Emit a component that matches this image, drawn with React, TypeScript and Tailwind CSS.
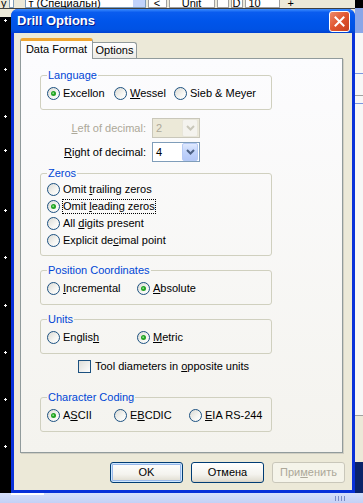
import React from 'react';

const Radio = ({ checked = false }: { checked?: boolean }) => (
  <svg width="13" height="13" viewBox="0 0 13 13" className="shrink-0">
    <defs>
      <linearGradient id="rbg" x1="0" y1="0" x2="1" y2="1">
        <stop offset="0" stopColor="#D8D8D2" />
        <stop offset="0.6" stopColor="#F6F6F3" />
        <stop offset="1" stopColor="#FFFFFF" />
      </linearGradient>
    </defs>
    <circle cx="6.5" cy="6.5" r="6" fill="url(#rbg)" stroke="#1C5180" strokeWidth="1" />
    {checked && (
      <>
        <circle cx="6.5" cy="6.5" r="2.5" fill="#21A121" />
        <circle cx="6.2" cy="6.2" r="1" fill="#86E086" />
      </>
    )}
  </svg>
);

const Check = () => (
  <svg width="13" height="13" viewBox="0 0 13 13" className="shrink-0">
    <defs>
      <linearGradient id="cbg" x1="0" y1="0" x2="1" y2="1">
        <stop offset="0" stopColor="#DCDCD7" />
        <stop offset="1" stopColor="#FFFFFF" />
      </linearGradient>
    </defs>
    <rect x="0.5" y="0.5" width="12" height="12" fill="url(#cbg)" stroke="#1C5180" />
  </svg>
);

const Chevron = ({ color }: { color: string }) => (
  <svg width="9" height="6" viewBox="0 0 9 6">
    <path d="M1 1 L4.5 4.5 L8 1" fill="none" stroke={color} strokeWidth="2" />
  </svg>
);

const Combo = ({ value, disabled = false }: { value: string; disabled?: boolean }) =>
  disabled ? (
    <div className="flex h-[20px] w-[48px] items-center border border-[#C9C7BA] bg-[#ECE9D8]">
      <span className="flex-1 pl-[3px] text-[#ACA899]">{value}</span>
      <div className="mr-[1px] flex h-[18px] w-[16px] items-center justify-center rounded-[2px] border border-[#E8E6DA] bg-[#F4F3EE]">
        <Chevron color="#C9C7BA" />
      </div>
    </div>
  ) : (
    <div className="flex h-[20px] w-[48px] items-center border border-[#7F9DB9] bg-white">
      <span className="flex-1 pl-[3px]">{value}</span>
      <div className="mr-[1px] flex h-[18px] w-[16px] items-center justify-center rounded-[2px] border border-[#B6CAF5] bg-[linear-gradient(to_bottom,#E0EAFE,#C1D3FB_50%,#B4C8F8)]">
        <Chevron color="#4D6185" />
      </div>
    </div>
  );

const RadioItem = ({
  checked = false,
  className = '',
  children,
}: {
  checked?: boolean;
  className?: string;
  children: React.ReactNode;
}) => (
  <div className={`flex h-[16px] items-center ${className}`}>
    <Radio checked={checked} />
    <span className="ml-[3px] whitespace-nowrap">{children}</span>
  </div>
);

const Group = ({
  label,
  className = '',
  children,
}: {
  label: string;
  className?: string;
  children: React.ReactNode;
}) => (
  <fieldset className={`w-[232px] min-w-0 rounded-[3px] border border-[#D0D0BF] px-[6px] ${className}`}>
    <legend className="px-[1px] leading-[14px] text-[#0046D5]">{label}</legend>
    {children}
  </fieldset>
);

const Button = ({
  children,
  variant = 'normal',
}: {
  children: React.ReactNode;
  variant?: 'default' | 'normal' | 'disabled';
}) => {
  if (variant === 'disabled') {
    return (
      <div className="flex h-[21px] w-[73px] items-center justify-center rounded-[3px] border border-[#C9C7BA] bg-[#F5F4EA] text-[#ACA899]">
        {children}
      </div>
    );
  }
  return (
    <div
      className={`flex h-[21px] w-[73px] items-center justify-center rounded-[3px] border border-[#003C74] bg-[linear-gradient(to_bottom,#FFFFFF,#F4F3EE_60%,#E3E0D5_90%,#D6D0C5)] ${
        variant === 'default' ? 'shadow-[inset_0_0_0_1px_#CEE7FF,inset_0_0_0_2px_#98B8EA]' : ''
      }`}
    >
      {children}
    </div>
  );
};

const marks = [20, 69, 116, 150, 210, 257, 305, 352, 399, 446];

export default function App() {
  return (
    <div className="relative h-[503px] w-[363px] overflow-hidden bg-[#ECE9D8] font-['Liberation_Sans',Arial,sans-serif] text-[11px] text-black">
      {/* underlying app toolbar, only its lower edge shows */}
      <div className="absolute left-0 top-0 flex h-[9px] w-full items-end gap-[2px] overflow-hidden border-b border-[#404040] bg-[#ECE9D8]">
        <span className="-mb-[1px] ml-[1px] leading-[12px]">y</span>
        <div className="h-[9px] w-[5px] border border-[#7F9DB9] bg-white" />
        <div className="ml-[9px] flex h-[14px] w-[121px] items-end border border-[#7F9DB9] bg-white">
          <span className="-mb-[2px] flex-1 pl-[3px] leading-[12px]">т (Специальн)</span>
          <div className="h-[12px] w-[12px] bg-[#C1D3FB]" />
        </div>
        <div className="flex h-[14px] w-[19px] items-end justify-center border border-[#A0A0A0] bg-white leading-[12px]">
          <span className="-mb-[2px]">&lt;</span>
        </div>
        <div className="flex h-[14px] w-[46px] items-end justify-center border border-[#A0A0A0] bg-white leading-[12px]">
          <span className="-mb-[2px]">Unit</span>
        </div>
        <div className="h-[14px] w-[12px] border border-[#A0A0A0] bg-white" />
        <div className="flex h-[14px] w-[12px] items-end justify-center border border-[#A0A0A0] bg-white leading-[12px]">
          <span className="-mb-[2px]">D</span>
        </div>
        <div className="flex h-[14px] w-[35px] items-end border border-[#A0A0A0] bg-white pl-[3px] leading-[12px]">
          <span className="-mb-[2px]">10</span>
        </div>
        <span className="ml-[6px] leading-[10px]">+</span>
      </div>

      {/* left canvas strip */}
      <div className="absolute left-0 top-[17px] h-[476px] w-[11px] bg-black">
        {marks.map((m) => (
          <div key={m} className="absolute left-[4px] h-[3px] w-[3px]" style={{ top: m - 18 }}>
            <div className="absolute left-[1px] top-0 h-[3px] w-[1px] bg-white" />
            <div className="absolute left-0 top-[1px] h-[1px] w-[3px] bg-white" />
          </div>
        ))}
      </div>

      {/* right strip */}
      <div className="absolute left-[355px] top-0 flex h-[493px] w-[8px] flex-col">
        <div className="h-[8px] bg-black" />
        <div className="h-[25px] bg-[#8AA6E8]" />
        <div className="h-[40px] bg-[#F7F7F7]" />
        <div className="h-[1px] bg-[#7A96DF]" />
        <div className="h-[21px] bg-[#F7F7F7]" />
        <div className="h-[1px] bg-[#A0A0A0]" />
        <div className="h-[7px] bg-[#F7F7F7]" />
        <div className="h-[1px] bg-[#7A96DF]" />
        <div className="h-[311px] bg-[#F7F7F7]" />
        <div className="h-[1px] bg-[#A0A0A0]" />
        <div className="h-[46px] bg-[#ECE9D8]" />
        <div className="flex-1 bg-[#0A246A]" />
      </div>

      {/* bottom strip */}
      <div className="absolute left-0 top-[493px] h-[10px] w-full bg-[linear-gradient(to_bottom,#D6E0FA,#C3D1F6)]">
        <div className="absolute left-[11px] top-0 h-[2px] w-[33px] bg-white" />
        <div className="absolute left-[335px] top-[3px] flex gap-[2px]">
          <div className="h-[5px] w-[1px] bg-[#7A8CC8]" />
          <div className="h-[5px] w-[1px] bg-[#7A8CC8]" />
          <div className="h-[5px] w-[1px] bg-[#7A8CC8]" />
          <div className="h-[5px] w-[1px] bg-[#7A8CC8]" />
        </div>
      </div>

      {/* dialog window */}
      <div className="absolute left-[11px] top-[9px] flex h-[484px] w-[344px] flex-col rounded-t-[7px] bg-[#0831D9]">
        <div className="relative flex h-[24px] items-center rounded-t-[7px] bg-[linear-gradient(to_bottom,#3D8DFF_0%,#0A5CEF_14%,#0055EA_50%,#0052E4_85%,#0040D0_100%)] pl-[6px]">
          <span className="text-[13px] font-bold text-white [text-shadow:1px_1px_0_#0A1C8C]">Drill Options</span>
          <div className="ml-auto mr-[5px] flex h-[21px] w-[21px] items-center justify-center rounded-[3px] border border-white bg-[linear-gradient(135deg,#EE8A6A,#E0552F_50%,#C8401E)]">
            <svg width="11" height="11" viewBox="0 0 11 11">
              <path d="M1.5 1.5 L9.5 9.5 M9.5 1.5 L1.5 9.5" stroke="white" strokeWidth="2" strokeLinecap="square" />
            </svg>
          </div>
        </div>

        <div className="mx-[3px] mb-[3px] flex flex-1 flex-col bg-[#ECE9D8] pl-[6px] pt-[5px]">
          {/* tabs */}
          <div className="relative z-10 flex h-[20px] items-end">
            <div className="-mb-[1px] flex h-[21px] w-[73px] items-center justify-center rounded-t-[3px] border-x border-t-[3px] border-x-[#919B9C] border-t-[#F0A530] bg-[#FCFCFE] pb-[2px]">
              Data Format
            </div>
            <div className="flex h-[16px] w-[44px] items-center justify-center rounded-tr-[3px] border-r border-t border-[#919B9C] bg-[linear-gradient(to_bottom,#FFFFFF,#ECEBE6)]">
              Options
            </div>
          </div>

          {/* tab panel */}
          <div className="flex h-[395px] w-[323px] flex-col border border-[#919B9C] bg-[linear-gradient(to_bottom,#FCFCFE,#F4F3EE)] pl-[19px] pt-[9px] shadow-[1px_1px_0_#D0CEC2]">
            <Group label="Language" className="pb-[8px]">
              <div className="mt-[3px] flex">
                <RadioItem checked className="w-[67px]">Excellon</RadioItem>
                <RadioItem className="w-[60px]">
                  <u>W</u>essel
                </RadioItem>
                <RadioItem>Sieb &amp; Meyer</RadioItem>
              </div>
            </Group>

            <div className="mt-[8px] flex h-[20px] items-center">
              <span className="w-[106px] text-right text-[#ACA899]">
                <u>L</u>eft of decimal:
              </span>
              <div className="ml-[6px]">
                <Combo value="2" disabled />
              </div>
            </div>
            <div className="mt-[4px] flex h-[20px] items-center">
              <span className="w-[106px] text-right">
                <u>R</u>ight of decimal:
              </span>
              <div className="ml-[6px]">
                <Combo value="4" />
              </div>
            </div>

            <Group label="Zeros" className="mt-[4px] pb-[6px]">
              <div className="mt-[1px] flex flex-col">
                <div className="flex h-[17px] items-center">
                  <Radio />
                  <span className="ml-[3px]">
                    Omit <u>t</u>railing zeros
                  </span>
                </div>
                <div className="flex h-[17px] items-center">
                  <Radio checked />
                  <span className="ml-[3px] leading-[13px] outline-1 outline-dotted outline-black">
                    Omit <u>l</u>eading zeros
                  </span>
                </div>
                <div className="flex h-[17px] items-center">
                  <Radio />
                  <span className="ml-[3px]">
                    All <u>d</u>igits present
                  </span>
                </div>
                <div className="flex h-[17px] items-center">
                  <Radio />
                  <span className="ml-[3px]">
                    Explicit de<u>c</u>imal point
                  </span>
                </div>
              </div>
            </Group>

            <Group label="Position Coordinates" className="mt-[7px] pb-[8px]">
              <div className="mt-[3px] flex">
                <RadioItem className="w-[90px]">
                  <u>I</u>ncremental
                </RadioItem>
                <RadioItem checked>
                  <u>A</u>bsolute
                </RadioItem>
              </div>
            </Group>

            <Group label="Units" className="mt-[7px] pb-[8px]">
              <div className="mt-[3px] flex">
                <RadioItem className="w-[90px]">
                  Englis<u>h</u>
                </RadioItem>
                <RadioItem checked>
                  <u>M</u>etric
                </RadioItem>
              </div>
            </Group>

            <div className="ml-[38px] mt-[4px] flex h-[16px] items-center">
              <Check />
              <span className="ml-[4px]">
                Tool diameters in <u>o</u>pposite units
              </span>
            </div>

            <Group label="Character Coding" className="mt-[16px] pb-[8px]">
              <div className="mt-[3px] flex">
                <RadioItem checked className="w-[67px]">
                  A<u>S</u>CII
                </RadioItem>
                <RadioItem className="w-[75px]">
                  E<u>B</u>CDIC
                </RadioItem>
                <RadioItem>
                  <u>E</u>IA RS-244
                </RadioItem>
              </div>
            </Group>
          </div>

          {/* buttons */}
          <div className="mt-[9px] flex justify-end gap-[8px] pr-[7px]">
            <Button variant="default">OK</Button>
            <Button>Отмена</Button>
            <Button variant="disabled">
              При<u>м</u>енить
            </Button>
          </div>
        </div>
      </div>
    </div>
  );
}
